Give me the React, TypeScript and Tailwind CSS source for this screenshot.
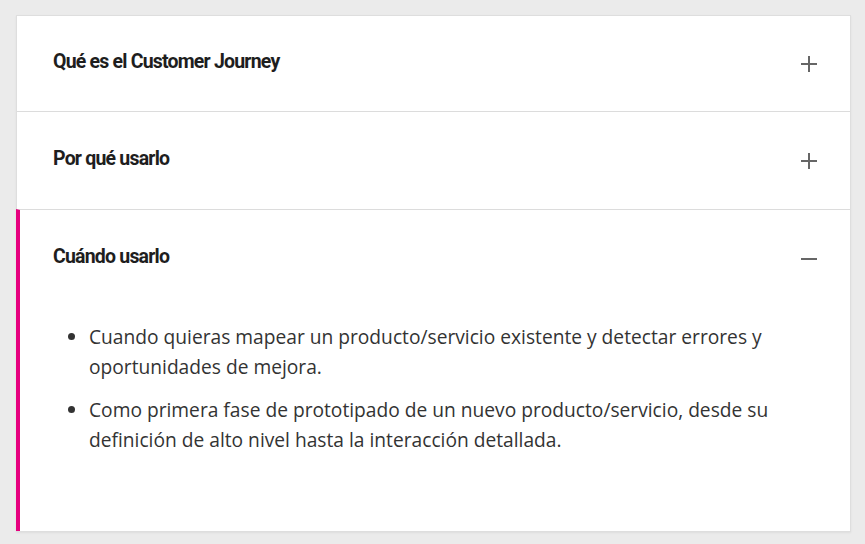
import React, { useState } from "react";

const ITEMS = [
  { title: "Qué es el Customer Journey", body: [] as string[] },
  { title: "Por qué usarlo", body: [] as string[] },
  {
    title: "Cuándo usarlo",
    body: [
      "Cuando quieras mapear un producto/servicio existente y detectar errores y oportunidades de mejora.",
      "Como primera fase de prototipado de un nuevo producto/servicio, desde su definición de alto nivel hasta la interacción detallada.",
    ],
  },
];

const Toggle = ({ open }: { open: boolean }) => (
  <svg width="16" height="16" viewBox="0 0 16 16" className="shrink-0">
    <rect x="0" y="7" width="16" height="2" fill="#666666" />
    {!open && <rect x="7" y="0" width="2" height="16" fill="#666666" />}
  </svg>
);

export default function App() {
  const [openIdx, setOpenIdx] = useState(2);

  return (
    <div className="min-h-[544px] bg-[#ebebeb] pt-[15px] pl-[16px] pr-[14px] pb-[14px]">
      <div className="bg-white border border-[#dedede] shadow-[0_1px_2px_rgba(0,0,0,0.06)]">
        {ITEMS.map((item, i) => {
          const open = openIdx === i;
          return (
            <div
              key={item.title}
              className={`${i > 0 ? "border-t border-[#dcdcdc]" : ""} ${open ? "border-l-4 border-l-[#e6007e] -ml-px" : ""}`}
            >
              <button
                onClick={() => setOpenIdx(open ? -1 : i)}
                className={`w-full flex items-center justify-between pr-[33px] text-left ${i === 0 ? "h-[95px]" : "h-[97px]"} ${open ? "pl-[33px]" : "pl-[36px]"}`}
              >
                <span
                  className="text-[19.5px] leading-[24px] font-bold text-[#1e1e1e] tracking-[-0.8px] -mt-[3px]"
                  style={{ fontFamily: "Roboto, sans-serif" }}
                >
                  {item.title}
                </span>
                <Toggle open={open} />
              </button>
              {open && (
                <ul
                  className="pl-[69px] pr-[40px] pt-[15px] pb-[76px] text-[19.2px] leading-[30px] text-[#333333] flex flex-col gap-[13px]"
                  style={{ fontFamily: '"Open Sans", sans-serif' }}
                >
                  {item.body.map((b) => (
                    <li key={b} className="list-disc">
                      {b}
                    </li>
                  ))}
                </ul>
              )}
            </div>
          );
        })}
      </div>
    </div>
  );
}
